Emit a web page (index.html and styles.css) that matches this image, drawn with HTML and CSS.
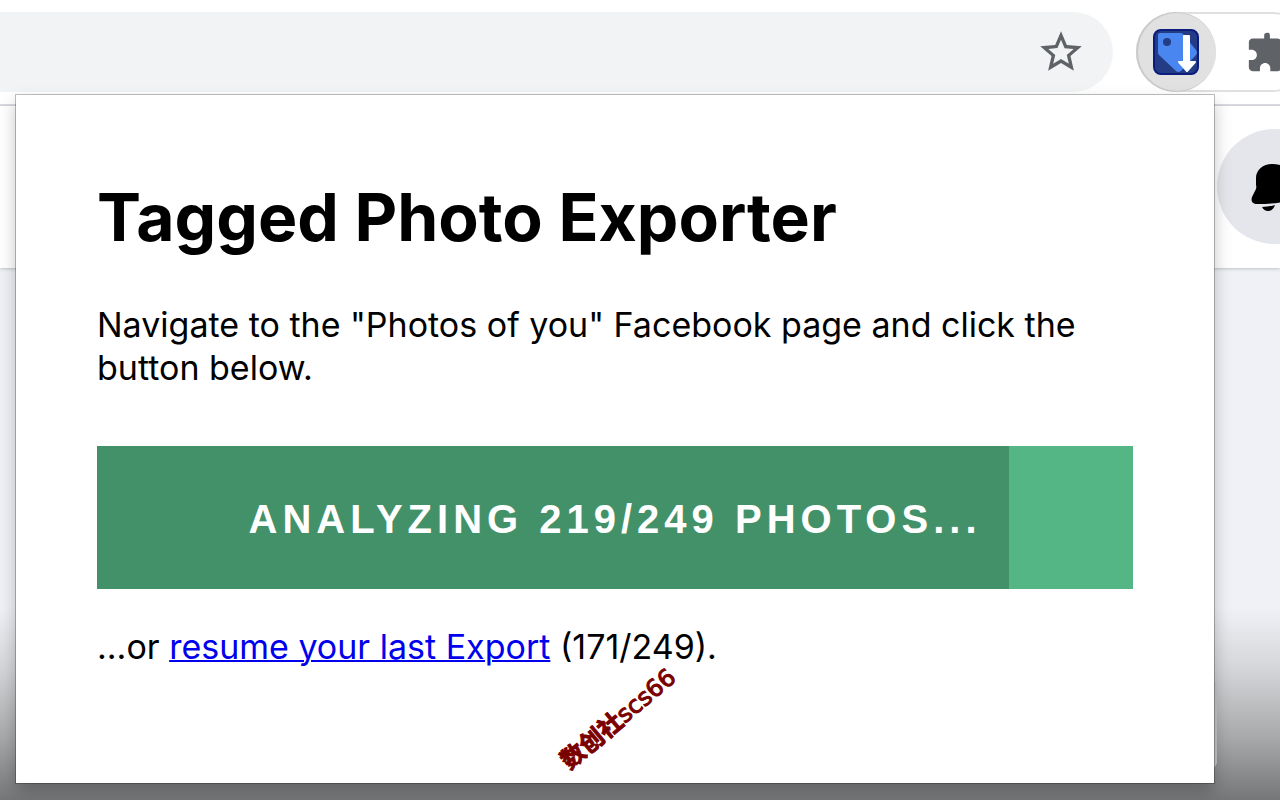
FILE: index.html
```html
<!DOCTYPE html>
<html lang="en">
<head>
    <meta charset="UTF-8">
    <meta name="viewport" content="width=device-width, initial-scale=1.0">
    <title>Tagged Photo Exporter</title>
    <link rel="stylesheet" href="styles.css">
</head>
<body>
    <div class="toolbar">
        <div class="address-bar">
            <button class="icon-button" aria-label="Bookmark">
                <svg width="50" height="50" viewBox="0 0 24 24"><path fill="#5f6368" d="M22 9.24l-7.19-.62L12 2 9.19 8.63 2 9.24l5.46 4.73L5.82 21 12 17.27 18.18 21l-1.63-7.03L22 9.24zM12 15.4l-3.76 2.27 1-4.28-3.32-2.88 4.38-.38L12 6.1l1.71 4.04 4.38.38-3.32 2.88 1 4.28L12 15.4z"/></svg>
            </button>
        </div>
        <div class="extensions">
            <button class="icon-button active" aria-label="Tagged Photo Exporter">
                <svg width="46" height="46" viewBox="0 0 46 46">
                    <rect x="1" y="1" width="44" height="44" rx="7" fill="#233c85" stroke="#0a1c7c" stroke-width="2"/>
                    <path d="M7 4h20q2 0 3 1l13 16q2 3 0 5L28 42q-3 2-5 0L6 26q-1-1-1-3V6q0-2 2-2z" fill="#4a86f0"/>
                    <circle cx="14" cy="13" r="4" fill="#233c85"/>
                    <path d="M31 7h5v26h6l-8 9-8-9h5z" fill="#fff" stroke="#fff" stroke-width="2" stroke-linejoin="round"/>
                </svg>
            </button>
            <button class="icon-button" aria-label="Extensions">
                <svg width="46" height="46" viewBox="0 0 24 24"><path fill="#5f6368" d="M20.5 11H19V7c0-1.100-.9-2-2-2h-4V3.500C13 2.120 12.500 2 11.500 2S10 2.500 10 3.500V5H4c-1.100 0-1.990.9-1.990 2v3.800H3.500c1.490 0 2.700 1.210 2.700 2.700s-1.210 2.700-2.700 2.700H2V20c0 1.100.9 2 2 2h3.800v-1.500c0-1.490 1.210-2.700 2.700-2.700s2.700 1.210 2.700 2.700V22H17c1.100 0 2-.9 2-2v-4h1.500c1.380 0 2.500-1.120 2.500-2.500S21.880 11 20.500 11z"/></svg>
            </button>
        </div>
    </div>

    <div class="site-header">
        <button class="bell" aria-label="Notifications">
            <svg width="48" height="48" viewBox="0 0 48 48">
                <path d="M21 1C12 1 5 7 5 15v7q1 3-1 6l-2 4c-3 5-1 9 4 9q16 0 25-2l12-3V15C43 6 32 1 21 1z"/>
                <path d="M11 44q7 0 13-2q-2 6-7 6q-4 0-6-4z"/>
            </svg>
        </button>
    </div>
    <div class="site-body">
        <div class="card-edge"></div>
    </div>

    <main class="popup">
        <h1>Tagged Photo Exporter</h1>
        <p>Navigate to the "Photos of you" Facebook page and click the button below.</p>
        <button class="export">
            <span class="progress" style="width: 88%"></span>
            <span class="label">Analyzing 219/249 photos...</span>
        </button>
        <p>...or <a href="#">resume your last Export</a> (171/249).</p>
        <div class="watermark"><b>数创社</b>scs66</div>
    </main>
</body>
</html>
```

FILE: styles.css
```css
* {
    box-sizing: border-box;
}
body {
    margin: 0;
    min-height: 100vh;
    display: flex;
    flex-direction: column;
    position: relative;
    overflow: hidden;
    background-color: #fff;
    font-family: Inter, "Liberation Sans", sans-serif;
    color: #000;
}
button {
    border: 0;
    padding: 0;
    background: none;
}

/* browser toolbar */
.toolbar {
    display: flex;
    gap: 23px;
    padding: 12px 0;
    border-bottom: 2px solid #d9dbe0;
}
.address-bar {
    flex: 1;
    height: 80px;
    display: flex;
    align-items: center;
    justify-content: flex-end;
    padding-right: 27px;
    border-radius: 0 40px 40px 0;
    background-color: #f1f3f4;
}
.icon-button {
    display: flex;
    align-items: center;
    justify-content: center;
}
.extensions {
    display: flex;
    align-items: center;
    gap: 29px;
    width: 176px;
    margin-right: -32px;
    border-radius: 40px;
    box-shadow: inset 0 0 0 2px #dfe0e2;
}
.extensions .active {
    width: 80px;
    height: 80px;
    border-radius: 50%;
    background-color: #e1e1e1;
    box-shadow: inset 1px 0 0 1px #cacaca;
}

/* page behind the popup */
.site-header {
    display: flex;
    justify-content: flex-end;
    padding: 23px 0 24px;
    position: relative;
    box-shadow: 0 1px 3px rgba(0, 0, 0, 0.2);
}
.bell {
    display: flex;
    align-items: center;
    justify-content: center;
    width: 115px;
    height: 115px;
    margin-right: -52px;
    border-radius: 50%;
    background-color: #e4e6eb;
}
.site-body {
    flex: 1;
    display: flex;
    align-items: flex-end;
    justify-content: flex-end;
    padding: 0 63px 32px;
    background: linear-gradient(to top, #757678, #a6a7a8 60px, #d4d5d8 130px, #f0f1f6 192px);
}
.card-edge {
    width: 20px;
    height: 88px;
    border-radius: 6px;
    background-color: #c4c5c6;
}

/* extension popup */
.popup {
    position: absolute;
    top: 95px;
    left: 16px;
    right: 66px;
    padding: 81px 81px 115px;
    background-color: #fff;
    box-shadow: 0 0 0 1px rgba(0, 0, 0, 0.25), 0 8px 16px rgba(0, 0, 0, 0.25);
}
.popup h1 {
    margin: 0 0 44px;
    font-size: 66px;
    line-height: 83px;
}
.popup p {
    margin: 0;
    font-size: 34px;
    line-height: 43px;
}
.popup a {
    color: #0000ee;
    text-decoration-thickness: 2px;
}
.export {
    display: block;
    position: relative;
    width: 100%;
    height: 143px;
    margin: 57px 0 36px;
    padding-top: 4px;
    background-color: #55b685;
    color: #fff;
    font: bold 40px "Liberation Sans", Arial, sans-serif;
    letter-spacing: 5px;
    text-transform: uppercase;
}
.progress {
    position: absolute;
    top: 0;
    bottom: 0;
    left: 0;
    background-color: #439169;
}
.label {
    position: relative;
}
.watermark {
    position: absolute;
    left: 532px;
    bottom: 50px;
    font: 24px/28px "DejaVu Sans", "Noto Sans CJK SC", sans-serif;
    color: #7a0000;
    -webkit-text-stroke: 1px #7a0000;
    transform: rotate(-40deg);
}
```
